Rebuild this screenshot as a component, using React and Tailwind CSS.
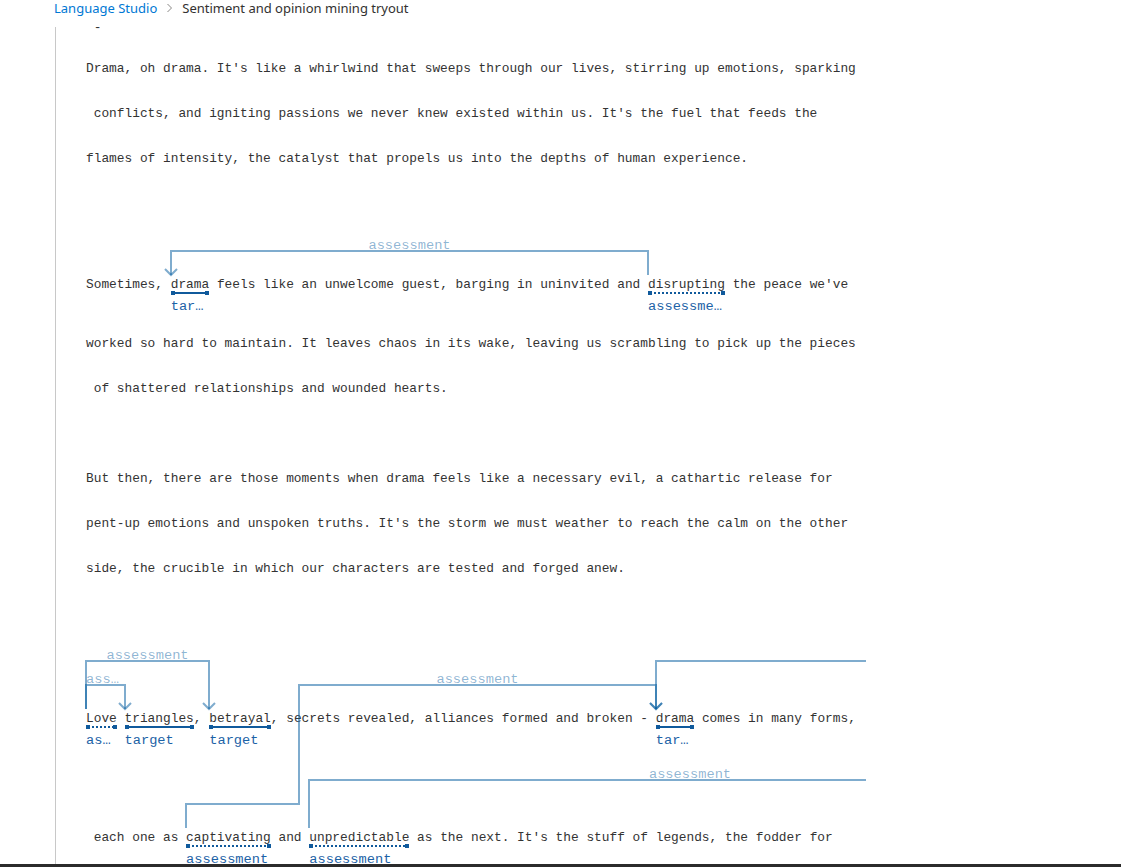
import React from "react";

// arcs are drawn in page coordinates; the overlay is shifted by the panel's origin
const ORIGIN_X = 56;
const ORIGIN_Y = 27;
const ARC = "rgba(0,90,158,0.5)";

function Mark({ children, kind = "target", label }) {
    return (
        <span className="relative inline-block">
            {children}
            {kind === "target" ? (
                <span className="absolute left-0 right-0 top-[30px] h-[2px] bg-[#105a9c]" />
            ) : (
                <span className="absolute left-[2px] right-[2px] top-[30px] h-[2px] bg-[repeating-linear-gradient(90deg,#105a9c_0_2px,transparent_2px_4px)]" />
            )}
            <span className="absolute left-0 top-[29px] w-[4px] h-[4px] bg-[#105a9c]" />
            <span className="absolute right-0 top-[29px] w-[4px] h-[4px] bg-[#105a9c]" />
            <span className="absolute left-0 top-[37px] leading-[16px] text-[13.7px] text-[#1c62a6] whitespace-nowrap">
                {label}
            </span>
        </span>
    );
}

function Line({ children, top = 0, bottom = 0 }) {
    const pad = {
        0: "",
        36: "pt-[36px]",
        60: "pt-[60px]",
    }[top];
    const padB = bottom ? "pb-[14px]" : "";
    return (
        <div className={`${pad} ${padB}`}>
            <div className="h-[45px] leading-[45px] whitespace-pre">{children}</div>
        </div>
    );
}

function Arrow({ x, y }) {
    return <path d={`M${x - 6},${y - 6} L${x},${y} L${x + 6},${y - 6}`} />;
}

function ArcLabel({ x, y, anchor = "middle", children }) {
    return (
        <text
            x={x}
            y={y}
            textAnchor={anchor}
            fill="rgba(0,90,158,0.45)"
            stroke="none"
            fontSize="13.7"
            fontFamily="'Liberation Mono', monospace"
        >
            {children}
        </text>
    );
}

function Arcs() {
    return (
        <svg className="absolute top-0 left-0 pointer-events-none" width="810" height="850">
            <g transform={`translate(${-ORIGIN_X},${-ORIGIN_Y})`} fill="none" stroke={ARC} strokeWidth="2">
                {/* disrupting -> drama */}
                <path d="M648,275 V251 H171 V275" />
                <Arrow x={171} y={275} />
                <ArcLabel x={409.5} y={249}>assessment</ArcLabel>

                {/* Love -> betrayal */}
                <path d="M86,709 V661 H209 V709" />
                <Arrow x={209} y={709} />
                <ArcLabel x={147.5} y={659}>assessment</ArcLabel>

                {/* Love -> triangles */}
                <path d="M86,709 V685 H125 V709" />
                <Arrow x={125} y={709} />
                <ArcLabel x={86} y={683} anchor="start">ass…</ArcLabel>

                {/* captivating -> drama */}
                <path d="M186,828 V804 H299 V685 H656 V709" />
                <Arrow x={656} y={709} />
                <ArcLabel x={477.5} y={683}>assessment</ArcLabel>

                {/* something off to the right -> drama */}
                <path d="M1000,661 H656 V709" />
                <Arrow x={656} y={709} />

                {/* unpredictable -> off to the right */}
                <path d="M309,828 V780 H1071" />
                <ArcLabel x={690} y={778}>assessment</ArcLabel>
            </g>
        </svg>
    );
}

export default function App() {
    return (
        <div className="h-[867px] w-full flex flex-col overflow-hidden bg-white">
            {/* Breadcrumb */}
            <div className="h-[27px] shrink-0 pl-[54px]">
                <nav className="flex items-center h-[16px] leading-[16px] text-[13px] font-['Noto_Sans',sans-serif]">
                    <span className="text-[#0078d4]">Language Studio</span>
                    <svg className="mx-[9px]" width="7" height="10" viewBox="0 0 7 10" fill="none" stroke="#8a8886" strokeWidth="1">
                        <path d="M1.5 1 L5.5 5 L1.5 9" />
                    </svg>
                    <span className="text-[#323130]">Sentiment and opinion mining tryout</span>
                </nav>
            </div>

            {/* Text panel */}
            <div className="relative flex-1 min-h-0 ml-[55px] w-[811px] border-l border-[#c8c8c8] overflow-hidden">
                <div className="pl-[30px] text-[12.83px] text-[#333333] font-['Liberation_Mono',monospace]">
                    <div className="h-[18.5px] overflow-hidden leading-[2px] whitespace-pre"> -</div>

                    <Line>Drama, oh drama. It's like a whirlwind that sweeps through our lives, stirring up emotions, sparking</Line>
                    <Line> conflicts, and igniting passions we never knew existed within us. It's the fuel that feeds the</Line>
                    <Line>flames of intensity, the catalyst that propels us into the depths of human experience.</Line>
                    <Line />

                    <Line top={36} bottom>
                        {"Sometimes, "}
                        <Mark label="tar…">drama</Mark>
                        {" feels like an unwelcome guest, barging in uninvited and "}
                        <Mark kind="assessment" label="assessme…">disrupting</Mark>
                        {" the peace we've"}
                    </Line>
                    <Line>worked so hard to maintain. It leaves chaos in its wake, leaving us scrambling to pick up the pieces</Line>
                    <Line> of shattered relationships and wounded hearts.</Line>
                    <Line />

                    <Line>But then, there are those moments when drama feels like a necessary evil, a cathartic release for</Line>
                    <Line>pent-up emotions and unspoken truths. It's the storm we must weather to reach the calm on the other</Line>
                    <Line>side, the crucible in which our characters are tested and forged anew.</Line>
                    <Line />

                    <Line top={60} bottom>
                        <Mark kind="assessment" label="as…">Love</Mark>
                        {" "}
                        <Mark label="target">triangles</Mark>
                        {", "}
                        <Mark label="target">betrayal</Mark>
                        {", secrets revealed, alliances formed and broken - "}
                        <Mark label="tar…">drama</Mark>
                        {" comes in many forms,"}
                    </Line>
                    <Line top={60} bottom>
                        {" each one as "}
                        <Mark kind="assessment" label="assessment">captivating</Mark>
                        {" and "}
                        <Mark kind="assessment" label="assessment">unpredictable</Mark>
                        {" as the next. It's the stuff of legends, the fodder for"}
                    </Line>
                </div>
                <Arcs />
            </div>

            <div className="h-[3px] shrink-0 bg-[#2b2b2b]" />
        </div>
    );
}
